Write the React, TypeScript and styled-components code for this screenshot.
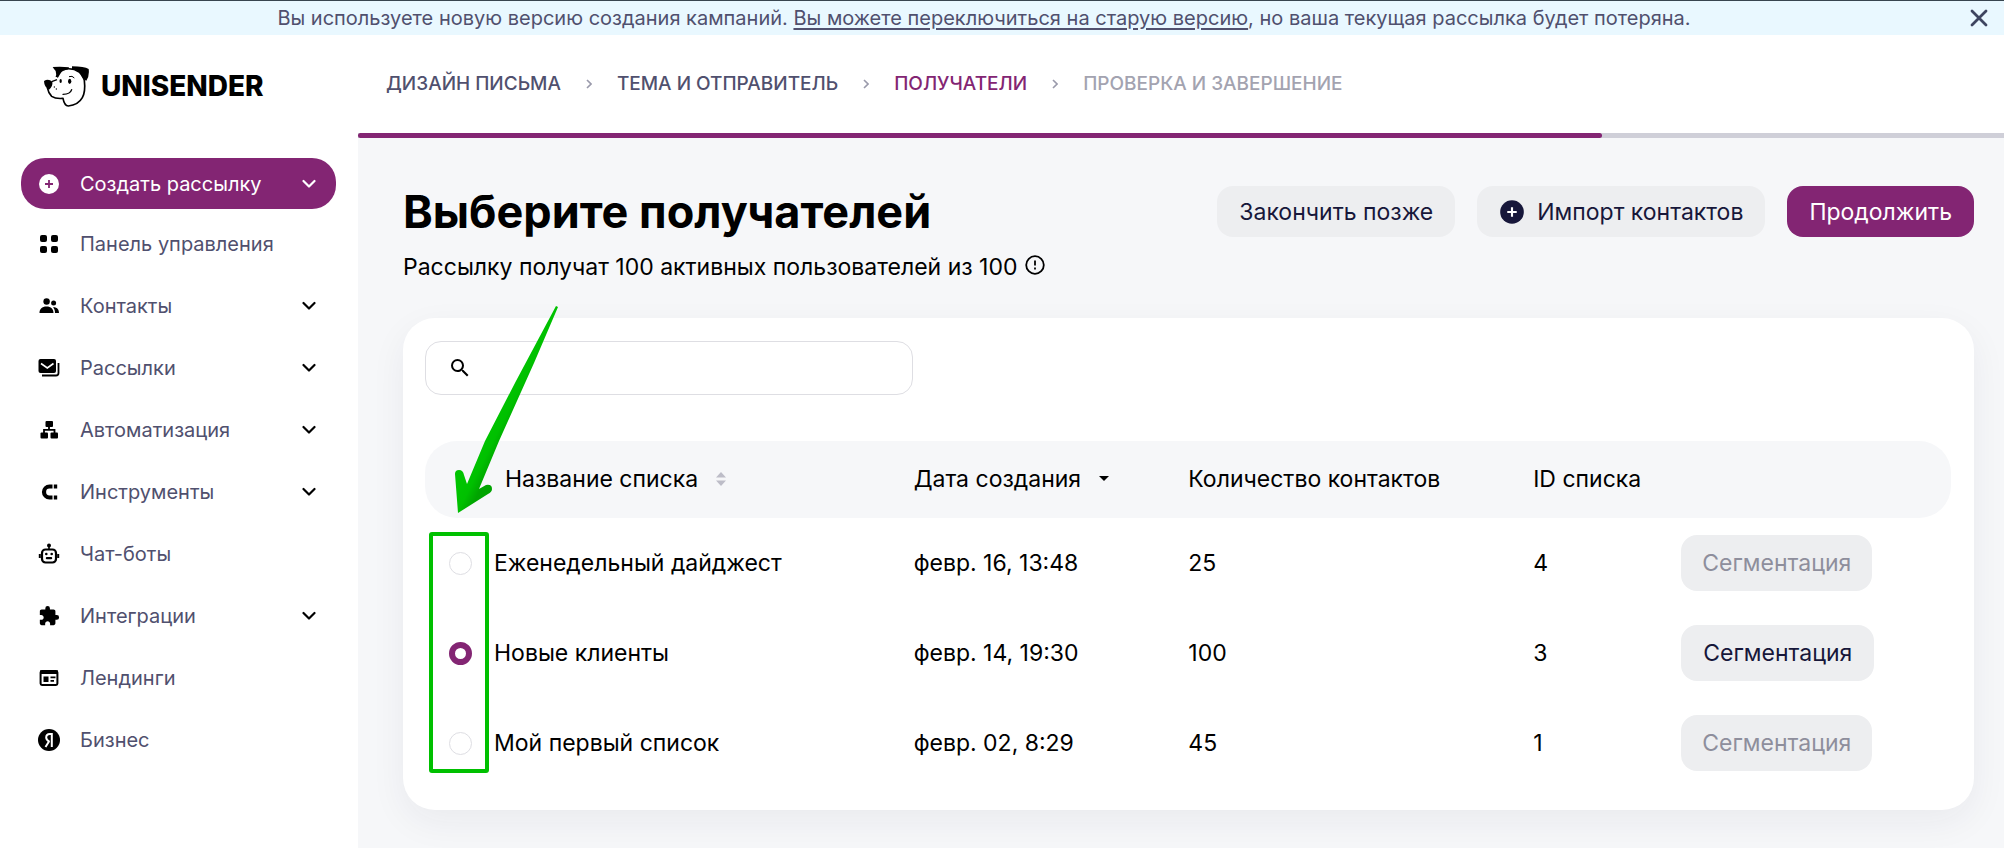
import React, { useState } from "react";
import styled, { createGlobalStyle, css } from "styled-components";
import { MdPeople, MdExtension, MdSearch } from "react-icons/md";

const purple = "#832573";
const navy = "#17173a";
const slate = "#50506e";

const GlobalStyle = createGlobalStyle`
  *, *::before, *::after { box-sizing: border-box; }
  body { margin: 0; background: #fff; }
  body, button, input { font-family: Inter, "Liberation Sans", sans-serif; }
  button { border: 0; padding: 0; background: none; cursor: pointer; }
`;

const Page = styled.div`
  min-height: 100vh;
  display: flex;
  flex-direction: column;
  color: #000;
`;

const Banner = styled.div`
  display: flex;
  align-items: center;
  height: 35px;
  padding: 0 14px 0 0;
  border-top: 1px solid #38454f;
  background: #e9f8ff;
  color: ${slate};
  font-size: 20px;
  line-height: 24px;
  p { flex: 1; margin: 0; text-align: center; }
  a { color: inherit; text-underline-offset: 3px; }
`;

const CloseButton = styled.button`
  display: flex;
  color: #3e4560;
`;

const Body = styled.div`
  flex: 1;
  display: flex;
`;

const Sidebar = styled.aside`
  flex: 0 0 358px;
  padding: 30px 22px 30px 21px;
`;

const Logo = styled.a`
  display: flex;
  align-items: center;
  gap: 12px;
  height: 42px;
  margin: 0 0 51px 22px;
  color: #000;
  font-size: 28px;
  line-height: 32px;
  font-weight: 800;
  text-decoration: none;
`;

const NavList = styled.nav`
  display: flex;
  flex-direction: column;
  gap: 10px;
`;

const NavItem = styled.button<{ $primary?: boolean }>`
  display: flex;
  align-items: center;
  gap: 20px;
  height: ${(p) => (p.$primary ? 51 : 52)}px;
  margin-bottom: ${(p) => (p.$primary ? -1 : 0)}px;
  padding: 0 20px 0 17px;
  border-radius: 24px;
  background: ${(p) => (p.$primary ? purple : "transparent")};
  color: ${(p) => (p.$primary ? "#fff" : slate)};
  font-size: 20px;
  line-height: 24px;
  text-align: left;
  span { flex: 1; }
  svg { flex: none; color: ${(p) => (p.$primary ? "#fff" : "#000")}; }
`;

const Main = styled.main`
  flex: 1;
  min-width: 0;
  display: flex;
  flex-direction: column;
  background: #f6f7f9;
`;

const Steps = styled.nav`
  display: flex;
  align-items: center;
  gap: 25px;
  height: 98px;
  padding: 0 28px;
  background: #fff;
  color: #9a9aab;
`;

const Step = styled.a<{ $state: "done" | "current" | "next" }>`
  color: ${(p) => ({ done: slate, current: purple, next: "#a3a3b0" })[p.$state]};
  font-size: 19px;
  line-height: 24px;
  font-weight: 500;
  text-decoration: none;
  white-space: nowrap;
`;

const ProgressTrack = styled.div`
  height: 5px;
  background: #cfcfd8;
`;

const ProgressFill = styled.div`
  height: 100%;
  border-radius: 3px;
  background: ${purple};
`;

const Content = styled.div`
  padding: 48px 30px 39px 45px;
`;

const TitleRow = styled.div`
  display: flex;
  align-items: flex-start;
  justify-content: space-between;
`;

const Title = styled.h1`
  margin: 0;
  font-size: 45px;
  line-height: 52px;
  font-weight: 700;
`;

const Subtitle = styled.p`
  display: flex;
  align-items: center;
  gap: 8px;
  margin: 14px 0 36px;
  font-size: 23px;
  line-height: 30px;
`;

const Actions = styled.div`
  display: flex;
  gap: 22px;
`;

const Button = styled.button<{ $variant?: "primary" }>`
  display: inline-flex;
  align-items: center;
  gap: 12px;
  height: 51px;
  padding: 0 22px;
  border-radius: 16px;
  background: ${(p) => (p.$variant ? purple : "#edeef0")};
  color: ${(p) => (p.$variant ? "#fff" : navy)};
  font-size: 23px;
  line-height: 28px;
  white-space: nowrap;
`;

const SegmentButton = styled(Button)`
  height: 56px;
  &:disabled { padding: 0 21px; color: #8e8e9c; cursor: default; }
`;

const Card = styled.section`
  position: relative;
  padding: 23px 23px 22px 22px;
  border-radius: 32px;
  background: #fff;
  box-shadow: 0 12px 36px rgba(30, 40, 60, 0.06);
`;

const SearchBox = styled.label`
  display: flex;
  align-items: center;
  gap: 12px;
  width: 488px;
  height: 54px;
  margin-bottom: 46px;
  padding: 0 22px;
  border: 1px solid #dedee3;
  border-radius: 16px;
  input { flex: 1; min-width: 0; border: 0; outline: 0; background: none; font-size: 23px; }
`;

const Table = styled.table`
  width: 100%;
  table-layout: fixed;
  border-collapse: separate;
  border-spacing: 0;
  font-size: 23px;
  line-height: 28px;
`;

const HeadCell = styled.th<{ $indent?: boolean }>`
  height: 77px;
  padding: 0 0 2px ${(p) => (p.$indent ? 11 : 0)}px;
  background: #f6f7f9;
  font-weight: 400;
  text-align: left;
  &:first-child { border-radius: 32px 0 0 32px; }
  &:last-child { border-radius: 0 32px 32px 0; }
`;

const SortButton = styled.button`
  display: inline-flex;
  align-items: center;
  gap: 18px;
  color: inherit;
  font-size: 23px;
  line-height: 28px;
`;

const Cell = styled.td`
  height: 90px;
  padding: 0;
`;

const RadioCell = styled(Cell)`
  padding-left: 24px;
`;

const Column = styled.col<{ $width?: string }>`
  ${(p) => p.$width && css`width: ${p.$width};`}
`;

const Radio = styled.input`
  appearance: none;
  display: block;
  width: 23px;
  height: 23px;
  margin: 0;
  border: 1px solid #dedee3;
  border-radius: 50%;
  background: #fff;
  &:checked { border: 6px solid ${purple}; }
`;

const Annotation = styled.svg`
  position: absolute;
  left: 20px;
  top: -16px;
  pointer-events: none;
`;

const DogLogo = () => (
  <svg width="46" height="42" viewBox="130 190 138 126" aria-hidden="true">
    <path d="M170 226 Q176 206 190 204 Q216 196 240 212 Q252 226 254 236 Q258 270 248 288 Q236 310 206 313 Q194 312 190 290 Q168 292 156 284 Q146 274 143 258" fill="#fff" stroke="#000" strokeWidth="5" strokeLinejoin="round" />
    <path d="M159 196 Q186 194 208 197 L206 203 Q188 206 182 216 L174 230 Q168 216 168 208 Q164 204 159 196 Z" />
    <path d="M217 194 Q254 194 267 202 Q270 222 260 237 Q248 232 243 216 Q234 204 217 203 Z" />
    <path d="M133 238 Q146 230 158 240 Q160 254 148 264 Q134 258 133 238 Z" />
    <path d="M156 240 L172 234" stroke="#000" strokeWidth="4" />
    <ellipse cx="183" cy="238" rx="3.5" ry="6" />
    <ellipse cx="210" cy="239" rx="5" ry="8" />
    <path d="M208 225 Q218 221 224 229" fill="none" stroke="#000" strokeWidth="3" />
    <path d="M190 278 Q212 278 216 264" fill="none" stroke="#000" strokeWidth="4" strokeLinecap="round" />
    <circle cx="164" cy="256" r="2" />
    <circle cx="170" cy="262" r="2" />
  </svg>
);

const Chevron = () => (
  <svg width="14" height="10" viewBox="0 0 14 10" fill="none" stroke="currentColor" strokeWidth="2.2" strokeLinecap="round" strokeLinejoin="round" aria-hidden="true">
    <path d="M1.5 2 7 7.5 12.5 2" />
  </svg>
);

const StepArrow = () => (
  <svg width="6" height="10" viewBox="0 0 6 10" fill="none" stroke="currentColor" strokeWidth="1.6" aria-hidden="true">
    <path d="M1 1 5 5 1 9" />
  </svg>
);

const PlusCircle = ({ size, cross }: { size: number; cross: string }) => (
  <svg width={size} height={size} viewBox="0 0 22 22" aria-hidden="true">
    <circle cx="11" cy="11" r="10" fill="currentColor" />
    <path d="M11 7v8M7 11h8" stroke={cross} strokeWidth="1.8" />
  </svg>
);

const Glyph = ({ children }: { children: React.ReactNode }) => (
  <svg width="22" height="22" viewBox="0 0 22 22" fill="currentColor" aria-hidden="true">{children}</svg>
);

const navItems: { label: string; icon: React.ReactNode; expandable?: boolean }[] = [
  {
    label: "Панель управления",
    icon: (
      <Glyph>
        <rect x="2" y="2" width="7" height="7" rx="2" />
        <rect x="13" y="2" width="7" height="7" rx="2" />
        <rect x="2" y="13" width="7" height="7" rx="2" />
        <rect x="13" y="13" width="7" height="7" rx="2" />
      </Glyph>
    ),
  },
  {
    label: "Контакты",
    icon: (
      <Glyph>
        <circle cx="8.6" cy="6.5" r="3.2" />
        <circle cx="15.6" cy="8" r="2.5" />
        <path d="M1.500 18c0-4 2.500-6.500 7-6.500s7 2.500 7 6.500ZM17 18c0-2.500-.6-4.300-2-5.700 3.500-.4 6 1.700 6 5.700Z" />
      </Glyph>
    ),
    expandable: true,
  },
  {
    label: "Рассылки",
    icon: (
      <Glyph>
        <rect x="0.5" y="2" width="17.5" height="14" rx="2" />
        <path d="M3 6.5 9.3 11l6.2-4.5" fill="none" stroke="#fff" strokeWidth="1.6" />
        <path d="M20.5 6v10a2.5 2.5 0 0 1-2.5 2.5H4" fill="none" stroke="currentColor" strokeWidth="1.8" />
      </Glyph>
    ),
    expandable: true,
  },
  {
    label: "Автоматизация",
    icon: (
      <Glyph>
        <rect x="7.5" y="2" width="7.5" height="6" rx="1" />
        <rect x="2.5" y="13.5" width="7.5" height="6" rx="1" />
        <rect x="12.5" y="13.5" width="7.5" height="6" rx="1" />
        <path d="M11 7v4M6 14v-3.2h10.5V14" fill="none" stroke="currentColor" strokeWidth="1.8" />
      </Glyph>
    ),
    expandable: true,
  },
  {
    label: "Инструменты",
    icon: (
      <Glyph>
        <path d="M14.500 5.500h-3a5.500 5.500 0 0 0 0 11h3" fill="none" stroke="currentColor" strokeWidth="4.2" />
        <path d="M15.800 3.400h3.400v4.200h-3.400zM15.800 14.400h3.400v4.200h-3.400z" />
      </Glyph>
    ),
    expandable: true,
  },
  {
    label: "Чат-боты",
    icon: (
      <Glyph>
        <circle cx="11" cy="2.6" r="2" />
        <path d="M11 3v4" stroke="currentColor" strokeWidth="1.6" />
        <rect x="4" y="6.5" width="14" height="13" rx="3.5" fill="none" stroke="currentColor" strokeWidth="2.2" />
        <path d="M1.8 11v4M20.2 11v4" stroke="currentColor" strokeWidth="2" />
        <circle cx="8.3" cy="11" r="1.3" />
        <circle cx="13.7" cy="11" r="1.3" />
        <rect x="7.8" y="14" width="6.4" height="2.2" rx="1" />
      </Glyph>
    ),
  },
  { label: "Интеграции", icon: <MdExtension size={22} />, expandable: true },
  {
    label: "Лендинги",
    icon: (
      <Glyph>
        <rect x="2.6" y="4" width="16.8" height="14" rx="1.4" fill="none" stroke="currentColor" strokeWidth="2" />
        <path d="M2 3.5h18V7H2zM5.5 9.5h5v5.5h-5zM12.5 9.5h5v1.8h-5zM12.5 13h3.5v1.8h-3.5z" />
      </Glyph>
    ),
  },
  {
    label: "Бизнес",
    icon: (
      <Glyph>
        <circle cx="11" cy="11" r="11" />
        <path d="M13.8 18V5h-2C9.500 5 8.200 6.500 8.200 8.600c0 2 1 3 3.200 4.100M11.300 12 7.500 18" fill="none" stroke="#fff" strokeWidth="2" />
      </Glyph>
    ),
  },
];

const lists = [
  { id: 4, name: "Еженедельный дайджест", date: "февр. 16, 13:48", count: 25 },
  { id: 3, name: "Новые клиенты", date: "февр. 14, 19:30", count: 100 },
  { id: 1, name: "Мой первый список", date: "февр. 02, 8:29", count: 45 },
];

export default function App() {
  const [selected, setSelected] = useState(3);
  const progress = 75.6;

  return (
    <Page>
      <GlobalStyle />
      <Banner>
        <p>
          Вы используете новую версию создания кампаний. <a href="#old">Вы можете переключиться на старую версию</a>, но ваша текущая рассылка будет потеряна.
        </p>
        <CloseButton aria-label="Закрыть">
          <svg width="22" height="22" viewBox="0 0 22 22" stroke="currentColor" strokeWidth="2.8" strokeLinecap="round" aria-hidden="true">
            <path d="M4 4 18 18M18 4 4 18" />
          </svg>
        </CloseButton>
      </Banner>
      <Body>
        <Sidebar>
          <Logo href="#home">
            <DogLogo />
            UNISENDER
          </Logo>
          <NavList>
            <NavItem $primary>
              <PlusCircle size={22} cross={purple} />
              <span>Создать рассылку</span>
              <Chevron />
            </NavItem>
            {navItems.map((item) => (
              <NavItem key={item.label}>
                {item.icon}
                <span>{item.label}</span>
                {item.expandable && <Chevron />}
              </NavItem>
            ))}
          </NavList>
        </Sidebar>
        <Main>
          <Steps>
            <Step href="#design" $state="done">ДИЗАЙН ПИСЬМА</Step>
            <StepArrow />
            <Step href="#subject" $state="done">ТЕМА И ОТПРАВИТЕЛЬ</Step>
            <StepArrow />
            <Step href="#recipients" $state="current">ПОЛУЧАТЕЛИ</Step>
            <StepArrow />
            <Step href="#review" $state="next">ПРОВЕРКА И ЗАВЕРШЕНИЕ</Step>
          </Steps>
          <ProgressTrack>
            <ProgressFill style={{ width: `${progress}%` }} />
          </ProgressTrack>
          <Content>
            <TitleRow>
              <Title>Выберите получателей</Title>
              <Actions>
                <Button>Закончить позже</Button>
                <Button>
                  <PlusCircle size={26} cross="#fff" />
                  Импорт контактов
                </Button>
                <Button $variant="primary">Продолжить</Button>
              </Actions>
            </TitleRow>
            <Subtitle>
              Рассылку получат 100 активных пользователей из 100
              <svg width="20" height="24" viewBox="0 0 20 24" fill="none" stroke="currentColor" strokeWidth="1.8" aria-hidden="true">
                <circle cx="10" cy="10" r="8.800" />
                <path d="M10 5.500v5M10 12.500v2" />
              </svg>
            </Subtitle>
            <Card>
              <SearchBox>
                <MdSearch size={24} />
                <input type="search" aria-label="Поиск" />
              </SearchBox>
              <Table>
                <colgroup>
                  <Column $width="69px" />
                  <Column $width="27.5%" />
                  <Column $width="18%" />
                  <Column $width="22.6%" />
                  <Column $width="9.7%" />
                  <Column />
                </colgroup>
                <thead>
                  <tr>
                    <HeadCell aria-label="Выбор" />
                    <HeadCell $indent>
                      <SortButton>
                        Название списка
                        <svg width="10" height="16" viewBox="0 0 10 16" fill="#bdbdc8" aria-hidden="true">
                          <path d="M5 1 10 6.500H0ZM5 15 0 9.500h10Z" />
                        </svg>
                      </SortButton>
                    </HeadCell>
                    <HeadCell>
                      <SortButton>
                        Дата создания
                        <svg width="10" height="6" viewBox="0 0 10 6" aria-hidden="true">
                          <path d="M0 0h10L5 5Z" />
                        </svg>
                      </SortButton>
                    </HeadCell>
                    <HeadCell>Количество контактов</HeadCell>
                    <HeadCell>ID списка</HeadCell>
                    <HeadCell aria-label="Действия" />
                  </tr>
                </thead>
                <tbody>
                  {lists.map((list) => (
                    <tr key={list.id}>
                      <RadioCell>
                        <Radio
                          type="radio"
                          name="list"
                          id={`list-${list.id}`}
                          checked={selected === list.id}
                          onChange={() => setSelected(list.id)}
                        />
                      </RadioCell>
                      <Cell><label htmlFor={`list-${list.id}`}>{list.name}</label></Cell>
                      <Cell>{list.date}</Cell>
                      <Cell>{list.count}</Cell>
                      <Cell>{list.id}</Cell>
                      <Cell>
                        <SegmentButton disabled={selected !== list.id}>Сегментация</SegmentButton>
                      </Cell>
                    </tr>
                  ))}
                </tbody>
              </Table>
              <Annotation width="140" height="480" viewBox="423 301 140 480" aria-hidden="true">
                <defs>
                  <linearGradient id="shaft" gradientUnits="userSpaceOnUse" x1="471" y1="462" x2="489" y2="471">
                    <stop offset="0" stopColor="#00c400" />
                    <stop offset="0.5" stopColor="#00c000" />
                    <stop offset="1" stopColor="#00a400" />
                  </linearGradient>
                </defs>
                <path d="M556 305 L558 306 L534 362 L499 440 L479 488 L486 484 Q492 483 492 488 Q492 491 488 493 L458 512 L455 473 Q455 469 459 469 Q463 469 464 474 L467 483 L485 440 L516 380 Z" fill="url(#shaft)" />
                <rect x="431" y="533" width="56" height="237" rx="1" fill="none" stroke="#00c000" strokeWidth="4" />
              </Annotation>
            </Card>
          </Content>
        </Main>
      </Body>
    </Page>
  );
}
